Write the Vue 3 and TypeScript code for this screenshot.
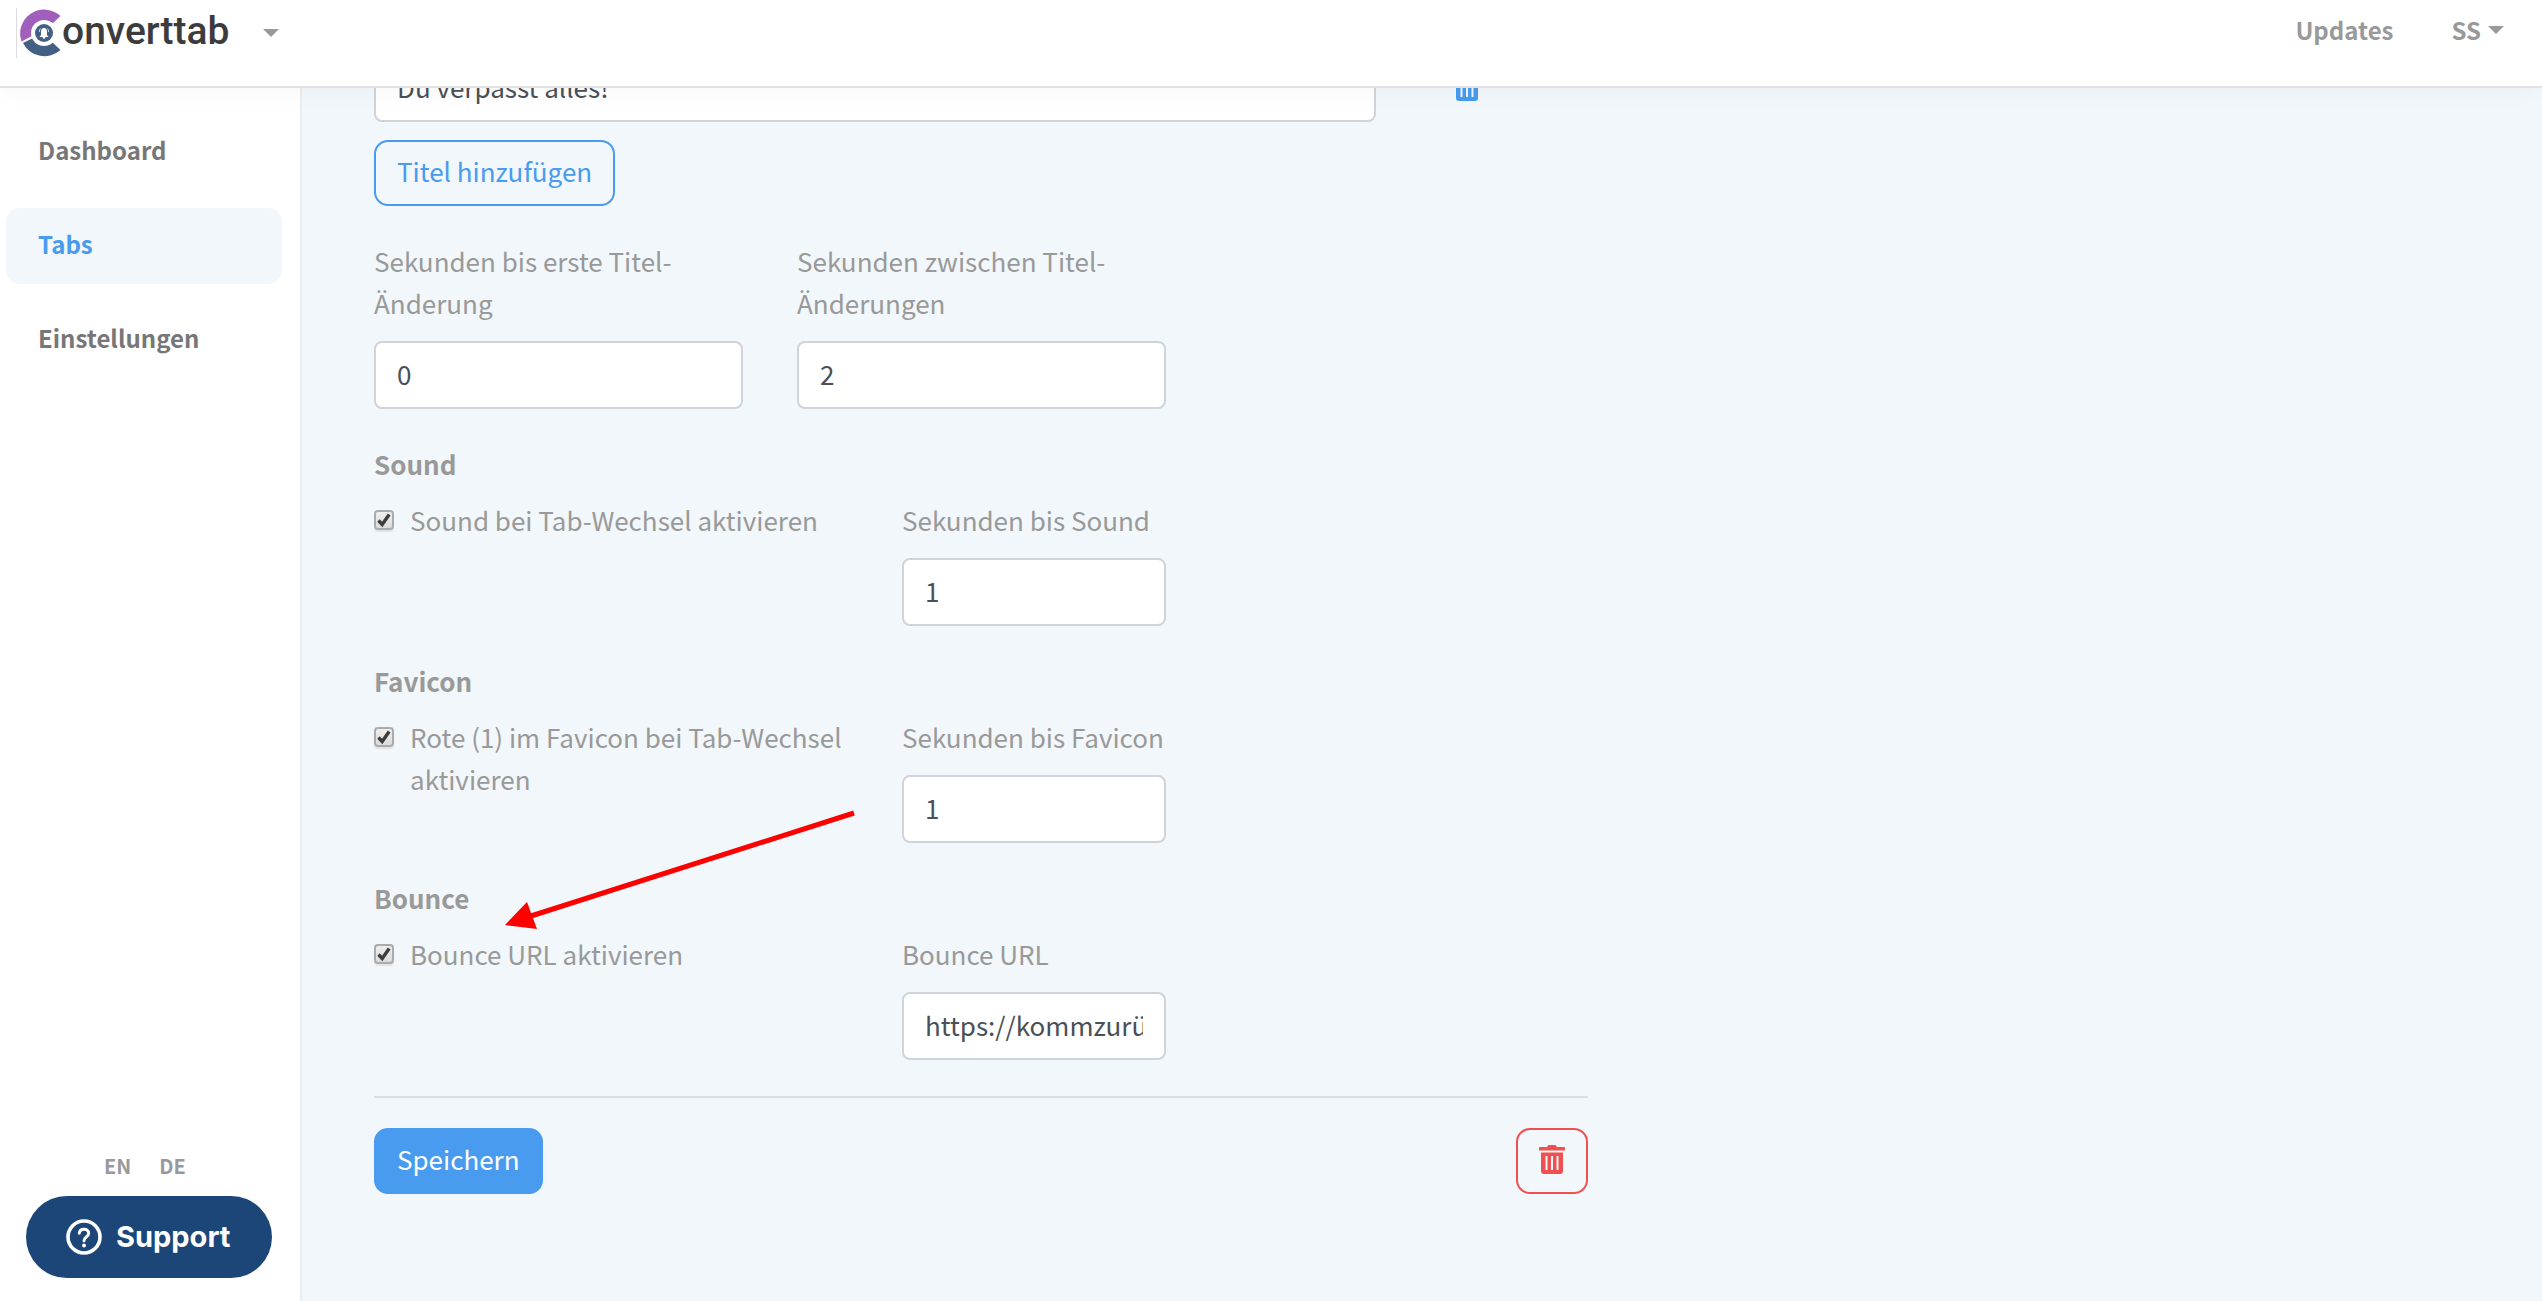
<script setup lang="ts">
import { reactive, ref } from 'vue'

interface NavItem {
  label: string
  active: boolean
}

interface Trigger {
  id: string
  heading: string
  toggleLabel: string
  fieldLabel: string
  enabled: boolean
  value: string
}

const navItems: NavItem[] = [
  { label: 'Dashboard', active: false },
  { label: 'Tabs', active: true },
  { label: 'Einstellungen', active: false },
]

const title = ref('Du verpasst alles!')
const firstDelay = ref('0')
const nextDelay = ref('2')

const triggers = reactive<Trigger[]>([
  {
    id: 'sound',
    heading: 'Sound',
    toggleLabel: 'Sound bei Tab-Wechsel aktivieren',
    fieldLabel: 'Sekunden bis Sound',
    enabled: true,
    value: '1',
  },
  {
    id: 'favicon',
    heading: 'Favicon',
    toggleLabel: 'Rote (1) im Favicon bei Tab-Wechsel aktivieren',
    fieldLabel: 'Sekunden bis Favicon',
    enabled: true,
    value: '1',
  },
  {
    id: 'bounce',
    heading: 'Bounce',
    toggleLabel: 'Bounce URL aktivieren',
    fieldLabel: 'Bounce URL',
    enabled: true,
    value: 'https://kommzurück.de',
  },
])
</script>

<template>
  <div class="shell">
    <header class="topbar">
      <button type="button" class="brand">
        <svg class="brand-mark" viewBox="0 0 42 50" aria-hidden="true">
          <path d="M1.500 33.500A24 24 0 0 1 40.500 8L33 15A14 14 0 0 0 12 28Z" fill="#9f5fba" />
          <path d="M3 35L13 30A14 14 0 0 0 32.500 34.500L40.500 42A24 24 0 0 1 3 35Z" fill="#436084" />
          <circle cx="24" cy="25" r="13" fill="#fff" />
          <circle cx="24" cy="25" r="9" fill="#436084" />
          <path d="M24 20c2 0 3 1.500 3 4v3l1.500 2h-9l1.500-2v-3c0-2.500 1-4 3-4Z" fill="#fff" />
          <circle cx="24" cy="29.500" r="1.300" fill="#fff" />
          <path d="M20.500 20.500c-1 1-1 2.500-1 3.500M27.500 20.500c1 1 1 2.500 1 3.500" fill="none" stroke="#fff" stroke-width=".8" />
        </svg>
        <span class="brand-name">onverttab</span>
        <span class="caret"></span>
      </button>
      <nav class="account">
        <a href="#updates">Updates</a>
        <a href="#account" class="user">SS<span class="caret"></span></a>
      </nav>
    </header>

    <div class="body">
      <aside class="sidebar">
        <nav class="menu">
          <a
            v-for="item in navItems"
            :key="item.label"
            href="#"
            class="menu-item"
            :class="{ active: item.active }"
          >{{ item.label }}</a>
        </nav>
        <div class="sidebar-foot">
          <div class="languages">
            <a href="#en">EN</a>
            <a href="#de">DE</a>
          </div>
          <button type="button" class="support">
            <svg viewBox="0 0 36 36" aria-hidden="true">
              <circle cx="18" cy="18" r="16" fill="none" stroke="#fff" stroke-width="3.600" />
              <path d="M13.300 14.200c.3-2.600 2.200-4 4.700-4 2.700 0 4.700 1.600 4.700 4 0 3.600-4.700 3.800-4.700 7.600" fill="none" stroke="#fff" stroke-width="3" stroke-linecap="round" />
              <circle cx="18" cy="26.600" r="2" fill="#fff" />
            </svg>
            <span>Support</span>
          </button>
        </div>
      </aside>

      <main class="main">
        <form class="form" @submit.prevent>
          <div class="title-row">
            <input v-model="title" class="field" type="text" aria-label="Titel" />
            <button type="button" class="icon-button" aria-label="Titel entfernen">
              <svg viewBox="0 0 26 29" aria-hidden="true">
                <path fill="currentColor" fill-rule="evenodd" d="M1 2h7l1.500-2h7L18 2h7a1 1 0 0 1 1 1v2.500H0V3a1 1 0 0 1 1-1ZM2 7.500h22V26a3 3 0 0 1-3 3H5a3 3 0 0 1-3-3ZM6.500 11v14h2V11ZM12 11v14h2V11ZM17.500 11v14h2V11Z" />
              </svg>
            </button>
          </div>

          <button type="button" class="btn btn-outline">Titel hinzufügen</button>

          <div class="pair">
            <div class="group">
              <label for="first-delay">Sekunden bis erste Titel-Änderung</label>
              <input id="first-delay" v-model="firstDelay" class="field" type="text" />
            </div>
            <div class="group">
              <label for="next-delay">Sekunden zwischen Titel-Änderungen</label>
              <input id="next-delay" v-model="nextDelay" class="field" type="text" />
            </div>
          </div>

          <section v-for="item in triggers" :key="item.id" class="trigger">
            <h2>{{ item.heading }}</h2>
            <div class="trigger-row">
              <div class="toggle">
                <span class="check">
                  <input :id="item.id + '-on'" v-model="item.enabled" type="checkbox" />
                  <svg v-if="item.enabled" viewBox="0 0 20 20" aria-hidden="true">
                    <path d="M4.500 10.500L8.200 14.500L15.200 4.500" fill="none" stroke="#3d3d3d" stroke-width="3.400" />
                  </svg>
                </span>
                <label :for="item.id + '-on'">{{ item.toggleLabel }}</label>
              </div>
              <div class="group">
                <label :for="item.id + '-value'">{{ item.fieldLabel }}</label>
                <input :id="item.id + '-value'" v-model="item.value" class="field" type="text" />
              </div>
            </div>
          </section>

          <div class="actions">
            <button type="submit" class="btn btn-primary">Speichern</button>
            <button type="button" class="btn btn-danger" aria-label="Löschen">
              <svg viewBox="0 0 26 29" aria-hidden="true">
                <path fill="currentColor" fill-rule="evenodd" d="M1 2h7l1.500-2h7L18 2h7a1 1 0 0 1 1 1v2.500H0V3a1 1 0 0 1 1-1ZM2 7.500h22V26a3 3 0 0 1-3 3H5a3 3 0 0 1-3-3ZM6.500 11v14h2V11ZM12 11v14h2V11ZM17.500 11v14h2V11Z" />
              </svg>
            </button>
          </div>

          <svg class="pointer" viewBox="0 0 350 120" aria-hidden="true">
            <path d="M349 3L26 106" stroke="#f00" stroke-width="5" />
            <path d="M0 115L22 92L32 119Z" fill="#f00" />
          </svg>
        </form>
      </main>
    </div>
  </div>
</template>

<style>
body {
  margin: 0;
  background: #f1f7fa;
}
</style>

<style scoped>
.shell {
  display: flex;
  flex-direction: column;
  min-height: 100vh;
  font-family: "Noto Sans CJK SC", "Noto Sans", sans-serif;
  font-size: 26px;
  line-height: 42px;
  color: #999;
}

.shell *,
.shell *::before {
  box-sizing: border-box;
}

a {
  color: inherit;
  text-decoration: none;
}

button,
input {
  margin: 0;
  font: inherit;
}

button {
  cursor: pointer;
}

.topbar {
  position: relative;
  z-index: 2;
  display: flex;
  align-items: flex-start;
  justify-content: space-between;
  height: 88px;
  padding: 8px 38px 0 16px;
  border-bottom: 2px solid #e2e2e2;
  background: #fff;
  box-shadow: 0 2px 24px rgba(0, 0, 0, 0.04);
}

.brand {
  display: flex;
  align-items: center;
  height: 50px;
  padding: 0 0 0 3px;
  border: 0;
  border-left: 1px solid #ddd;
  background: none;
}

.brand-mark {
  width: 42px;
  height: 50px;
}

.brand-name {
  padding-bottom: 4px;
  font-family: Roboto, sans-serif;
  font-size: 39px;
  font-weight: 500;
  line-height: 42px;
  color: #3c3c3c;
}

.caret {
  border: 8px solid transparent;
  border-top-color: #999;
  border-bottom: 0;
}

.brand .caret {
  margin-left: 34px;
}

.account {
  display: flex;
  gap: 58px;
  font-size: 24px;
  font-weight: 700;
  line-height: 44px;
}

.user {
  display: flex;
  align-items: center;
  gap: 7px;
}

.body {
  display: flex;
  flex: 1;
}

.sidebar {
  display: flex;
  flex: none;
  flex-direction: column;
  justify-content: space-between;
  width: 302px;
  padding: 26px 18px 23px 6px;
  border-right: 2px solid #e9edf0;
  background: #fff;
}

.menu {
  display: flex;
  flex-direction: column;
  gap: 18px;
}

.menu-item {
  padding: 0 32px 4px;
  border-radius: 14px;
  font-size: 24px;
  font-weight: 700;
  line-height: 72px;
  color: #777;
}

.menu-item.active {
  background: #f1f7fa;
  color: #489bee;
}

.sidebar-foot {
  display: flex;
  flex-direction: column;
  gap: 9px;
  padding: 0 10px 0 20px;
}

.languages {
  display: flex;
  justify-content: center;
  gap: 28px;
  padding-right: 8px;
  font-size: 20px;
  font-weight: 700;
}

.support {
  display: flex;
  align-items: center;
  gap: 14px;
  height: 82px;
  padding: 0 40px;
  border: 0;
  border-radius: 41px;
  background: #1b4677;
  color: #fff;
  font-family: Inter, sans-serif;
  font-size: 29px;
  font-weight: 700;
}

.support svg {
  width: 36px;
  height: 36px;
}

.main {
  flex: 1;
  min-width: 0;
  padding: 0 72px 60px;
}

/* the form is scrolled so that its first row slides under the top bar */
.form {
  position: relative;
  max-width: 1214px;
  margin-top: -34px;
}

.title-row {
  display: flex;
  align-items: center;
  gap: 78px;
  margin-bottom: 18px;
  padding-right: 108px;
}

.field {
  display: block;
  width: 100%;
  height: 68px;
  padding: 0 21px 3px;
  border: 2px solid #ced4da;
  border-radius: 8px;
  background: #fff;
  color: #495057;
}

.icon-button {
  flex: none;
  padding: 0 0 4px;
  border: 0;
  background: none;
  color: #489bee;
}

.icon-button svg,
.btn svg {
  display: block;
  width: 26px;
  height: 29px;
}

.btn {
  height: 66px;
  padding: 0 21px 4px;
  border: 2px solid;
  border-radius: 14px;
  background: none;
}

.btn-outline {
  border-color: #489bee;
  color: #489bee;
}

.btn-primary {
  border-color: #489bee;
  background: #489bee;
  color: #fff;
}

.btn-danger {
  border-color: #f05050;
  color: #f05050;
}

.pair {
  display: grid;
  grid-template-columns: 1fr 1fr;
  gap: 54px;
  max-width: 792px;
  margin-top: 34px;
}

.group label {
  display: block;
  margin-bottom: 17px;
}

.trigger {
  max-width: 792px;
  margin-top: 34px;
}

.trigger h2 {
  margin: 0 0 14px;
  font-size: inherit;
  font-weight: 700;
}

.trigger-row {
  display: grid;
  grid-template-columns: 1fr 264px;
  gap: 54px;
}

.toggle {
  display: flex;
  align-items: flex-start;
  gap: 16px;
}

.check {
  position: relative;
  flex: none;
  width: 20px;
  height: 20px;
  margin-top: 11px;
}

.check input {
  display: block;
  width: 20px;
  height: 20px;
  appearance: none;
  border: 2px solid #ababab;
  border-radius: 4px;
  background: linear-gradient(#eee, #dcdcdc);
  box-shadow: 0 2px 1px rgba(0, 0, 0, 0.08);
}

.check svg {
  position: absolute;
  inset: 0;
  pointer-events: none;
}

.actions {
  display: flex;
  justify-content: space-between;
  margin-top: 36px;
  padding-top: 30px;
  border-top: 2px solid #d9dfe2;
}

.pointer {
  position: absolute;
  top: 756px;
  left: 131px;
  width: 350px;
  height: 120px;
  pointer-events: none;
}
</style>
